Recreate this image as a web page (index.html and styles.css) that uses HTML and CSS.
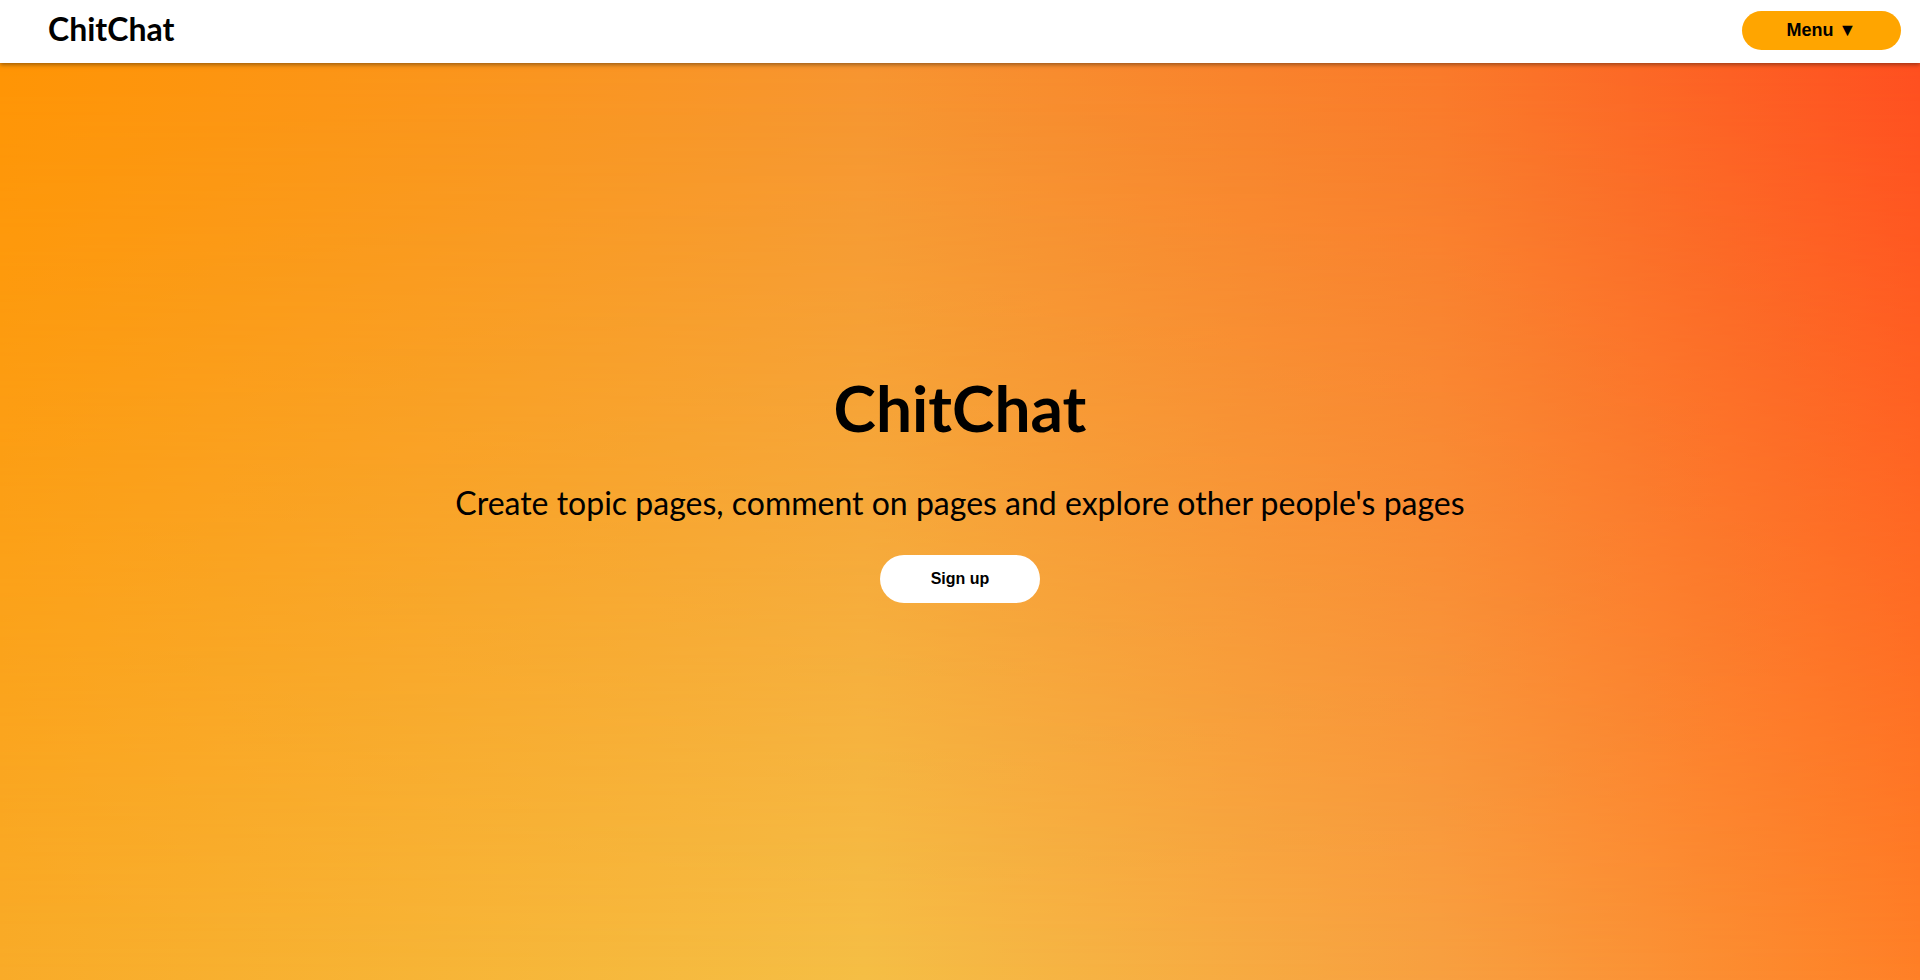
FILE: index.html
```html
<!DOCTYPE html>
<html lang="en">
<head>
<meta charset="utf-8">
<title>ChitChat</title>
<link rel="stylesheet" href="styles.css">
</head>
<body>
<header class="topbar">
  <div class="logo">ChitChat</div>
  <button class="menu-btn">Menu ▼</button>
</header>
<main class="hero">
  <div class="hero-content">
    <h1 class="hero-title">ChitChat</h1>
    <p class="hero-sub">Create topic pages, comment on pages and explore other people's pages</p>
    <button class="signup-btn">Sign up</button>
  </div>
</main>
</body>
</html>
```
FILE: styles.css
```css
html, body {
  margin: 0;
  padding: 0;
  height: 100%;
}
body {
  font-family: "Lato", "Liberation Sans", sans-serif;
  color: #000;
  display: flex;
  flex-direction: column;
  overflow: hidden;
}
.topbar {
  height: 63px;
  flex: 0 0 63px;
  background: #fff;
  display: flex;
  align-items: center;
  justify-content: space-between;
  padding: 0 19px 0 48px;
  box-shadow: 0 2px 4px rgba(0, 0, 0, 0.35);
  position: relative;
  z-index: 2;
}
.logo {
  font-family: "Lato", sans-serif;
  font-weight: 700;
  font-size: 32px;
  line-height: 1;
  margin-top: -6px;
}
.menu-btn {
  width: 159px;
  height: 39px;
  border: none;
  border-radius: 20px;
  background: #ffa500;
  font-family: "Liberation Sans", Arial, sans-serif;
  font-weight: 700;
  font-size: 18px;
  color: #000;
  margin-top: -2px;
}
.hero {
  flex: 1;
  position: relative;
  background: linear-gradient(to right, #ff9505 0%, #f79530 45%, #fa7a2a 75%, #ff4f20 100%);
  display: flex;
  justify-content: center;
}
.hero::before {
  content: "";
  position: absolute;
  inset: 0;
  background: linear-gradient(to right, #f9ab28 0%, #f5be45 45%, #f8a040 75%, #ff8026 100%);
  -webkit-mask-image: linear-gradient(to bottom, transparent 0%, #000 100%);
  mask-image: linear-gradient(to bottom, transparent 0%, #000 100%);
}
.hero-content {
  position: relative;
  display: flex;
  flex-direction: column;
  align-items: center;
  padding-top: 307px;
}
.hero-title {
  margin: 0;
  font-weight: 700;
  font-size: 64px;
  line-height: 1.2;
}
.hero-sub {
  margin: 37px 0 0;
  font-size: 32px;
  font-weight: 400;
  line-height: 1.2;
}
.signup-btn {
  margin-top: 33px;
  width: 160px;
  height: 48px;
  border: none;
  border-radius: 24px;
  background: #fff;
  font-family: "Liberation Sans", Arial, sans-serif;
  font-weight: 700;
  font-size: 16px;
  color: #000;
}
```
